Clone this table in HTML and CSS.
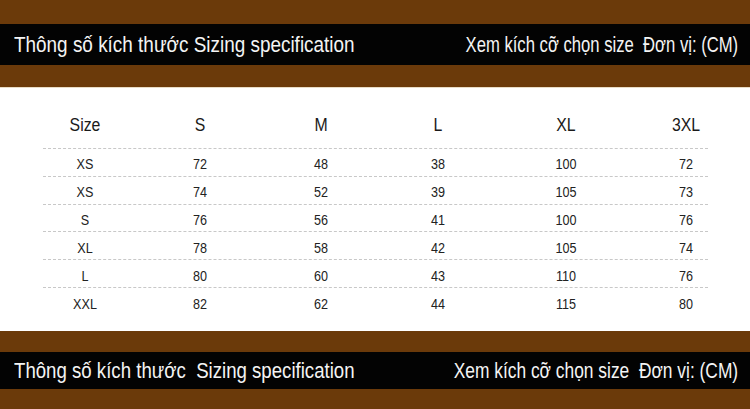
FILE: index.html
```html
<!DOCTYPE html>
<html lang="vi">
<head>
<meta charset="utf-8">
<title>Thông số kích thước</title>
<link rel="stylesheet" href="styles.css">
</head>
<body>
<header class="band band-top">
  <div class="bar">
    <div class="slot left"><span class="title">Thông số kích thước&nbsp;Sizing specification</span></div>
    <div class="slot right"><span class="title">Xem kích cỡ chọn size&nbsp;&nbsp;Đơn vị: (CM)</span></div>
  </div>
</header>
<main class="sheet">
  <div class="row head">
    <span>Size</span><span>S</span><span>M</span><span>L</span><span>XL</span><span>3XL</span>
  </div>
  <div class="row"><span>XS</span><span>72</span><span>48</span><span>38</span><span>100</span><span>72</span></div>
  <div class="row"><span>XS</span><span>74</span><span>52</span><span>39</span><span>105</span><span>73</span></div>
  <div class="row"><span>S</span><span>76</span><span>56</span><span>41</span><span>100</span><span>76</span></div>
  <div class="row"><span>XL</span><span>78</span><span>58</span><span>42</span><span>105</span><span>74</span></div>
  <div class="row"><span>L</span><span>80</span><span>60</span><span>43</span><span>110</span><span>76</span></div>
  <div class="row last"><span>XXL</span><span>82</span><span>62</span><span>44</span><span>115</span><span>80</span></div>
</main>
<footer class="band band-bottom">
  <div class="bar">
    <div class="slot left"><span class="title">Thông số kích thước&nbsp;&nbsp;Sizing specification</span></div>
    <div class="slot right"><span class="title">Xem kích cỡ chọn size&nbsp;&nbsp;Đơn vị: (CM)</span></div>
  </div>
</footer>
</body>
</html>
```
FILE: styles.css
```css
html, body {
  margin: 0;
  padding: 0;
  background: #ffffff;
}
body {
  width: 750px;
  height: 409px;
  overflow: hidden;
  font-family: "Liberation Sans", Arial, sans-serif;
}
.band {
  background: #6b3a0a;
  display: flex;
  flex-direction: column;
}
.band-top {
  padding: 24px 0 22px;
  border-bottom: 1px solid #e9dcc6;
}
.band-bottom {
  padding: 21px 0 20px;
}
.bar {
  background: #030303;
  display: flex;
  justify-content: space-between;
  align-items: center;
  padding: 0 12px 0 14px;
}
.band-top .bar { height: 41px; }
.band-bottom .bar { height: 37px; }
.slot {
  flex: 0 0 auto;
  width: 300px;
  display: flex;
}
.slot.right {
  justify-content: flex-end;
}
.title {
  flex: 0 0 auto;
  display: inline-block;
  color: #f4f4f4;
  font-size: 22px;
  white-space: nowrap;
  transform: scaleX(0.86);
}
.slot.left .title { transform-origin: left center; }
.slot.right .title { transform-origin: right center; }
.band-top .slot.right .title { transform: scaleX(0.757); }
.band-bottom .slot.left .title { transform: scaleX(0.847); }
.band-bottom .slot.right .title { transform: scaleX(0.79); }
.sheet {
  height: 243px;
  box-sizing: border-box;
  padding: 15px 0 0 43px;
}
.row {
  width: 665px;
  display: grid;
  grid-template-columns: 84px 146px 96px 138px 118px 122px;
  align-items: center;
  height: 27.8px;
  box-sizing: border-box;
  padding-top: 3px;
  border-bottom: 1px dashed #c8c8c8;
  color: #222;
  font-size: 15px;
}
.row span {
  display: block;
  text-align: center;
  transform: scaleX(0.84);
}
.row.head {
  height: 46px;
  padding-top: 0;
  font-size: 18px;
  color: #1a1a1a;
}
.row.head span {
  transform: scaleX(0.88);
}
.row.last {
  border-bottom: none;
}
```
